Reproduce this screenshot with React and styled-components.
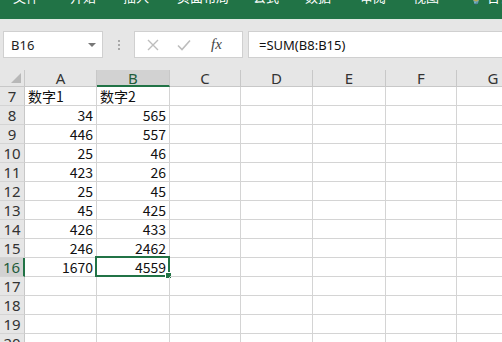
import React from 'react'
import styled, { createGlobalStyle } from 'styled-components'

const Global = createGlobalStyle`
  body {
    margin: 0;
    background: #e6e6e6;
    font-family: "Noto Sans", "Noto Sans CJK SC", sans-serif;
    overflow: hidden;
  }
`

const Page = styled.div`
  width: 502px;
  height: 342px;
  overflow: hidden;
  display: flex;
  flex-direction: column;
  & > * {
    flex-shrink: 0;
  }
`

const Ribbon = styled.div`
  height: 20px;
  box-sizing: border-box;
  background: #217346;
  border-bottom: 1px solid #dfe9e2;
  overflow: hidden;
  display: flex;
  align-items: flex-end;
  padding-left: 13px;
`

const Tab = styled.div`
  color: #fff;
  font-family: "Noto Sans CJK SC", sans-serif;
  font-size: 13px;
  line-height: 13px;
  margin-bottom: 16px;
  width: ${p => p.w}px;
  flex-shrink: 0;
  white-space: nowrap;
`

const FormulaBar = styled.div`
  height: 50px;
  box-sizing: border-box;
  padding: 11px 0 12px 3px;
  display: flex;
  align-items: stretch;
`

const NameBox = styled.div`
  width: 100px;
  box-sizing: border-box;
  background: #fff;
  border: 1px solid #d0d0d0;
  display: flex;
  align-items: center;
  justify-content: space-between;
  padding: 0 6px 0 7px;
  font-size: 13px;
  color: #222;
`

const Caret = styled.span`
  width: 0;
  height: 0;
  border-left: 4px solid transparent;
  border-right: 4px solid transparent;
  border-top: 4px solid #777;
`

const Grip = styled.div`
  width: 31px;
  display: flex;
  flex-direction: column;
  align-items: center;
  justify-content: center;
  gap: 2px;
  span {
    width: 2px;
    height: 2px;
    background: #a8a8a8;
  }
`

const Buttons = styled.div`
  width: 109px;
  box-sizing: border-box;
  background: #fff;
  border: 1px solid #d0d0d0;
  display: flex;
  align-items: center;
  padding-left: 12px;
  gap: 18px;
`

const Fx = styled.span`
  font-family: "Liberation Serif", serif;
  font-style: italic;
  font-size: 15px;
  color: #444;
  margin-left: 2px;
`

const FormulaInput = styled.div`
  flex: 1;
  margin-left: 5px;
  background: #fff;
  border: 1px solid #d0d0d0;
  border-right: none;
  display: flex;
  align-items: center;
  padding-left: 10px;
  font-size: 13px;
  color: #111;
`

const Sheet = styled.div`
  display: grid;
  grid-template-columns: 25px 72px 73px 71px 72px 73px 71px 73px;
  grid-template-rows: 17px;
  grid-auto-rows: 19px;
  background: #fff;
  width: 530px;
`

const Corner = styled.div`
  background: #e6e6e6;
  border-right: 1px solid #c8c8c8;
  border-bottom: 1px solid #c8c8c8;
  box-sizing: border-box;
  position: relative;
  &::after {
    content: '';
    position: absolute;
    right: 3px;
    bottom: 3px;
    border-left: 10px solid transparent;
    border-bottom: 10px solid #b8b8b8;
  }
`

const ColHead = styled.div`
  box-sizing: border-box;
  background: ${p => (p.active ? '#d2d2d2' : '#e6e6e6')};
  border-right: 1px solid #c8c8c8;
  border-bottom: ${p => (p.active ? '2px solid #217346' : '1px solid #c8c8c8')};
  color: ${p => (p.active ? '#1f5c3a' : '#333')};
  font-family: "Noto Sans", sans-serif;
  font-size: 15px;
  line-height: 16px;
  text-align: center;
`

const RowHead = styled.div`
  box-sizing: border-box;
  background: ${p => (p.active ? '#d2d2d2' : '#e6e6e6')};
  border-right: ${p => (p.active ? '2px solid #217346' : '1px solid #c8c8c8')};
  border-bottom: 1px solid #d4d4d4;
  color: ${p => (p.active ? '#1f5c3a' : '#333')};
  font-family: "Noto Sans", sans-serif;
  font-size: 15px;
  line-height: 19px;
  text-align: center;
`

const Cell = styled.div`
  box-sizing: border-box;
  border-right: 1px solid #d4d4d4;
  border-bottom: 1px solid #d4d4d4;
  font-family: "Noto Sans CJK SC", sans-serif;
  font-size: 14px;
  line-height: 18px;
  color: #111;
  padding: 0 3px;
  text-align: ${p => (p.num ? 'right' : 'left')};
  white-space: nowrap;
  position: relative;
`

const Selection = styled.div`
  position: absolute;
  left: -2px;
  top: -2px;
  right: -1px;
  bottom: -1px;
  border: 2px solid #217346;
  pointer-events: none;
  &::after {
    content: '';
    position: absolute;
    right: -4px;
    bottom: -4px;
    width: 5px;
    height: 5px;
    background: #217346;
    border: 1px solid #fff;
  }
`

const tabs = [
  ['文件', 57], ['开始', 53], ['插入', 54], ['页面布局', 76], ['公式', 52],
  ['数据', 55], ['审阅', 53], ['视图', 55], ['💡 告诉我', 60],
]

const cols = ['A', 'B', 'C', 'D', 'E', 'F', 'G']

const data = {
  7: ['数字1', '数字2'],
  8: [34, 565],
  9: [446, 557],
  10: [25, 46],
  11: [423, 26],
  12: [25, 45],
  13: [45, 425],
  14: [426, 433],
  15: [246, 2462],
  16: [1670, 4559],
}

const rows = [7, 8, 9, 10, 11, 12, 13, 14, 15, 16, 17, 18, 19, 20]

const App = () => {
  return (
    <Page>
      <Global />
      <Ribbon>
        {tabs.map(([t, w]) => (
          <Tab key={t} w={w}>{t}</Tab>
        ))}
      </Ribbon>
      <FormulaBar>
        <NameBox>
          B16
          <Caret />
        </NameBox>
        <Grip>
          <span />
          <span />
          <span />
        </Grip>
        <Buttons>
          <svg width="12" height="12" viewBox="0 0 12 12">
            <path d="M1 1 L11 11 M11 1 L1 11" stroke="#bdbdbd" strokeWidth="1.4" />
          </svg>
          <svg width="14" height="12" viewBox="0 0 14 12">
            <path d="M1 6.5 L5 10.5 L13 1.5" stroke="#bdbdbd" strokeWidth="1.6" fill="none" />
          </svg>
          <Fx>fx</Fx>
        </Buttons>
        <FormulaInput>=SUM(B8:B15)</FormulaInput>
      </FormulaBar>
      <Sheet>
        <Corner />
        {cols.map(c => (
          <ColHead key={c} active={c === 'B'}>{c}</ColHead>
        ))}
        {rows.map(r => (
          <React.Fragment key={r}>
            <RowHead active={r === 16}>{r}</RowHead>
            {cols.map((c, i) => {
              const v = data[r] && data[r][i]
              return (
                <Cell key={c} num={typeof v === 'number'}>
                  {v}
                  {r === 16 && c === 'B' && <Selection />}
                </Cell>
              )
            })}
          </React.Fragment>
        ))}
      </Sheet>
    </Page>
  )
}

export default App
